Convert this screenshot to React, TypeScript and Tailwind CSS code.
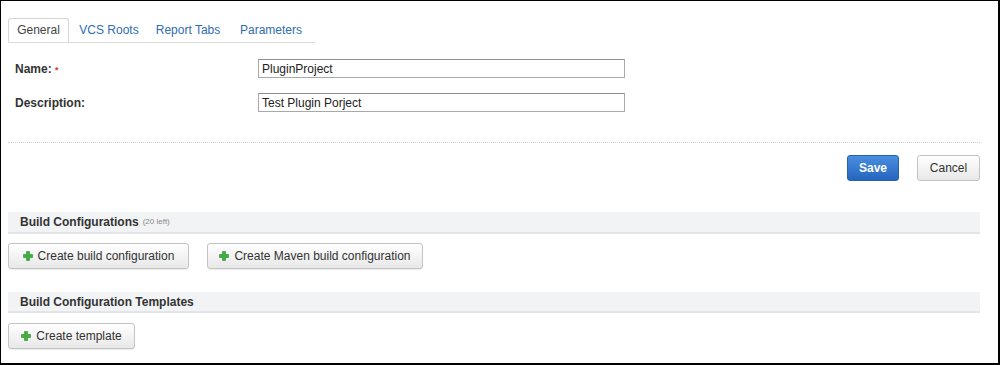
import React from "react";

const Plus = () => (
  <svg width="10" height="10" viewBox="0 0 10 10" className="shrink-0">
    <path d="M3.5 0.5h3v3h3v3h-3v3h-3v-3h-3v-3h3z" fill="#3cb23c" stroke="#2a8a2a" strokeWidth="0.6" />
  </svg>
);

const Btn = ({ children, w }: { children: React.ReactNode; w: string }) => (
  <button
    className={`flex h-[26px] items-center justify-center gap-[5px] rounded-[3px] border border-[#c4c4c4] bg-gradient-to-b from-[#ffffff] to-[#e8e8e8] text-[12px] text-[#333] shadow-[0_1px_1px_rgba(0,0,0,0.08)] ${w}`}
  >
    <Plus />
    {children}
  </button>
);

export default function App() {
  return (
    <div
      className="box-border h-[365px] w-[1000px] border-l border-t border-r-2 border-b-2 border-black bg-white text-[12px] text-[#333]"
      style={{ fontFamily: '"Liberation Sans", Arial, sans-serif' }}
    >
      <div className="pl-[7px] pr-[18px] pt-[17px]">
        {/* Tabs */}
        <div className="flex w-[307px] border-b border-[#dcdcdc]">
          <div className="-mb-px flex h-[24px] w-[61px] items-center justify-center rounded-t-[3px] border border-b-white border-[#d6d6d6] bg-white text-[#444]">
            General
          </div>
          <div className="flex h-[24px] w-[80px] items-center justify-center text-[#2f6db3]">VCS Roots</div>
          <div className="flex h-[24px] w-[78px] items-center justify-center text-[#2f6db3]">Report Tabs</div>
          <div className="flex h-[24px] w-[88px] items-center justify-center text-[#2f6db3]">Parameters</div>
        </div>

        {/* Fields */}
        <div className="mt-[16px] flex items-center">
          <div className="w-[250px] pl-[7px] font-bold text-[#333]">
            Name: <span className="text-[9px] text-[#d33]">*</span>
          </div>
          <div className="flex h-[19px] w-[367px] items-center border border-[#a9a9a9] border-t-[#8f8f8f] pl-[3px] text-[12px] text-[#222]">
            PluginProject
          </div>
        </div>
        <div className="mt-[15px] flex items-center">
          <div className="w-[250px] pl-[7px] font-bold text-[#333]">Description:</div>
          <div className="flex h-[19px] w-[367px] items-center border border-[#a9a9a9] border-t-[#8f8f8f] pl-[3px] text-[12px] text-[#222]">
            Test Plugin Porject
          </div>
        </div>

        <div className="mt-[30px] border-t border-dotted border-[#cfcfcf]" />

        <div className="mt-[12px] flex justify-end gap-[18px]">
          <button className="h-[26px] w-[52px] rounded-[3px] border border-[#2a62a8] bg-gradient-to-b from-[#4a8ee0] to-[#2466bf] text-[12px] font-bold text-white">
            Save
          </button>
          <button className="h-[26px] w-[63px] rounded-[3px] border border-[#c4c4c4] bg-gradient-to-b from-[#ffffff] to-[#e8e8e8] text-[12px] text-[#333]">
            Cancel
          </button>
        </div>

        <div className="mt-[31px] flex h-[22px] items-center border-b-2 border-[#e3e5e8] bg-[#f2f3f5] pl-[12px]">
          <span className="font-bold text-[#333]">Build Configurations</span>
          <span className="ml-[4px] text-[8px] text-[#888]">(20 left)</span>
        </div>
        <div className="mt-[9px] flex gap-[18px]">
          <Btn w="w-[181px]">Create build configuration</Btn>
          <Btn w="w-[216px]">Create Maven build configuration</Btn>
        </div>

        <div className="mt-[23px] flex h-[21px] items-center border-b-2 border-[#e3e5e8] bg-[#f2f3f5] pl-[12px]">
          <span className="font-bold text-[#333]">Build Configuration Templates</span>
        </div>
        <div className="mt-[10px] flex">
          <Btn w="w-[127px]">Create template</Btn>
        </div>
      </div>
    </div>
  );
}
